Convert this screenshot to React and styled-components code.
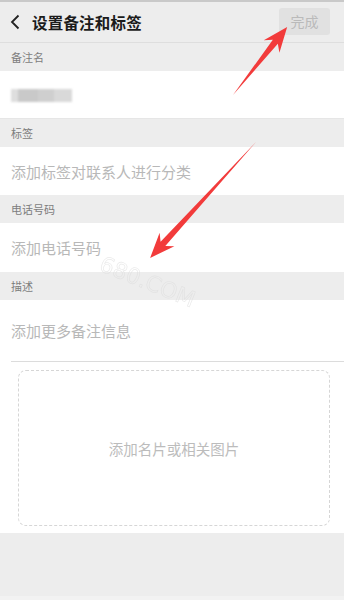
import React from "react";
import styled, { createGlobalStyle } from "styled-components";

const Global = createGlobalStyle`
  html, body { margin: 0; padding: 0; background: #ededed; }
  body { font-family: "Noto Sans CJK SC", "Noto Sans", sans-serif; }
`;

const Page = styled.div`
  position: relative;
  width: 344px;
  height: 600px;
  overflow: hidden;
  background: #ededed;
  display: flex;
  flex-direction: column;
`;

const TopStrip = styled.div`
  height: 2px;
  background: #c9c9c9;
`;

const Header = styled.header`
  height: 40px;
  display: flex;
  align-items: center;
  padding: 0 14px 0 8px;
  background: #ededed;
  border-bottom: 1px solid #dedede;
`;

const BackButton = styled.span`
  width: 14px;
  height: 20px;
  display: flex;
  align-items: center;
  justify-content: center;
  margin-right: 10px;
`;

const Title = styled.h1`
  flex: 1;
  margin: 0;
  font-size: 15.5px;
  font-weight: 700;
  color: #1b1b1b;
  letter-spacing: 0.2px;
`;

const DoneButton = styled.button`
  width: 51px;
  height: 27px;
  border: none;
  border-radius: 3px;
  background: #e1e1e1;
  color: #bababa;
  font-family: inherit;
  font-size: 14px;
  padding: 0;
  margin-top: -2px;
`;

const Label = styled.div`
  height: 28px;
  display: flex;
  align-items: center;
  padding-left: 11px;
  font-size: 11px;
  color: #7d7d7d;
`;

const Row = styled.div`
  height: ${(p) => p.$h || 48}px;
  display: flex;
  align-items: center;
  padding-left: 11px;
  background: #fff;
  font-size: 15px;
  color: #b8b8b8;
  box-sizing: border-box;
  border-bottom: ${(p) => (p.$line ? "1px solid #e6e6e6" : "none")};
`;

const Blurred = styled.div`
  width: 61px;
  height: 13px;
  margin-top: 2px;
  background: linear-gradient(
    90deg,
    #dedede 0 12%,
    #c9c9c9 12% 45%,
    #cfcfcf 45% 70%,
    #d9d9d9 70% 100%
  );
  filter: blur(1px);
`;

const DescBlock = styled.div`
  background: #fff;
  display: flex;
  flex-direction: column;
  padding-bottom: 7px;
`;

const DescRow = styled.div`
  height: 61px;
  margin-left: 11px;
  display: flex;
  align-items: center;
  border-bottom: 1px solid #dcdcdc;
  font-size: 15px;
  color: #b8b8b8;
`;

const CardBox = styled.div`
  margin: 8px 14px 0 18px;
  height: 154px;
  border: 1px dashed #d6d6d6;
  border-radius: 8px;
  display: flex;
  align-items: center;
  justify-content: center;
  font-size: 14.5px;
  color: #bcbcbc;
`;

const Filler = styled.div`
  flex: 1;
  background: #ededed;
  border-bottom: 4px solid #f2f2f2;
`;

const Overlay = styled.svg`
  position: absolute;
  left: 0;
  top: 0;
  pointer-events: none;
`;

function Arrow({ x, y, len, angle }) {
  const L = len;
  const pts = `0,0 ${L - 19},-3.2 ${L - 25},-10 ${L},0 ${L - 25},10 ${L - 19},3.2`;
  return (
    <polygon
      points={pts}
      fill="#f23b3b"
      transform={`translate(${x} ${y}) rotate(${angle})`}
    />
  );
}

export default function App() {
  return (
    <>
      <Global />
      <Page>
        <TopStrip />
        <Header>
          <BackButton>
            <svg width="10" height="16" viewBox="0 0 10 16">
              <path d="M8.5 1.5 L2 8 L8.5 14.5" fill="none" stroke="#222" strokeWidth="1.8" />
            </svg>
          </BackButton>
          <Title>设置备注和标签</Title>
          <DoneButton>完成</DoneButton>
        </Header>
        <Label>备注名</Label>
        <Row $line>
          <Blurred />
        </Row>
        <Label>标签</Label>
        <Row>添加标签对联系人进行分类</Row>
        <Label>电话号码</Label>
        <Row $h={49}>添加电话号码</Row>
        <Label>描述</Label>
        <DescBlock>
          <DescRow>添加更多备注信息</DescRow>
          <CardBox>添加名片或相关图片</CardBox>
        </DescBlock>
        <Filler />
        <Overlay width="344" height="600" viewBox="0 0 344 600">
          <text
            x="98"
            y="270"
            transform="rotate(22 98 270)"
            fontFamily="DejaVu Sans, sans-serif"
            fontSize="22"
            fill="none"
            stroke="#dcdcdc"
            strokeWidth="0.7"
            opacity="0.6"
          >
            680.COM
          </text>
          <Arrow x={233} y={95} len={87} angle={-51.5} />
          <Arrow x={256} y={142} len={157} angle={132.4} />
        </Overlay>
      </Page>
    </>
  );
}
